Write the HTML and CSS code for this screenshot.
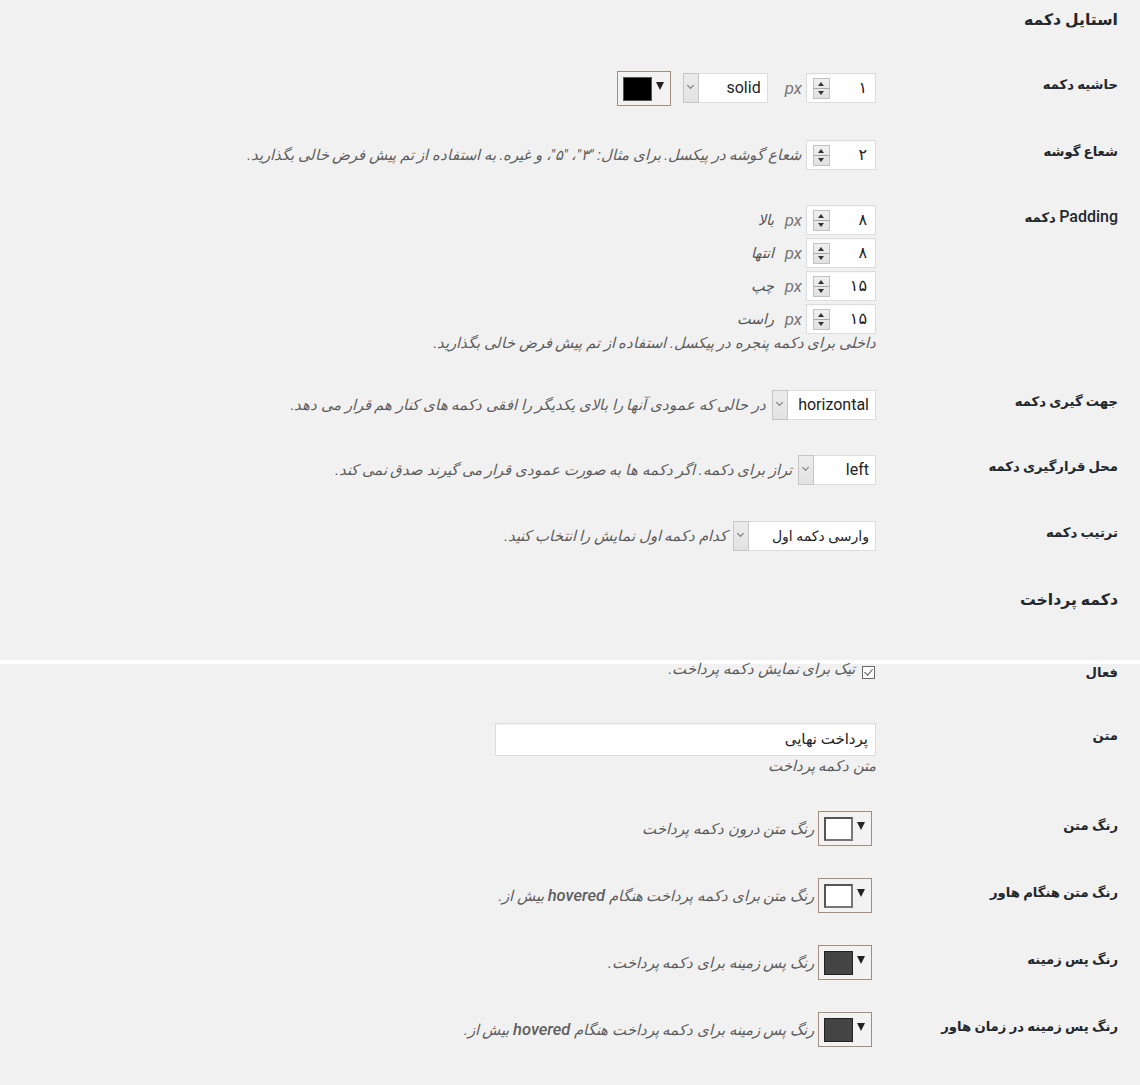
FILE: index.html
```html
<!DOCTYPE html>
<html lang="fa" dir="rtl">
<head>
<meta charset="utf-8">
<title>استایل دکمه</title>
<link rel="stylesheet" href="styles.css">
</head>
<body>
<div class="sec">
  <h2 class="title title-1">استایل دکمه</h2>

  <div class="row r1">
    <div class="th">حاشیه دکمه</div>
    <div class="td">
      <div class="inline">
        <span class="num"><span class="num-val">۱</span><span class="spin"></span></span>
        <span class="unit">px</span>
        <span class="sel w-solid"><span class="sel-val">solid</span><span class="sel-arrow"></span></span>
        <span class="picker picker-row1"><span class="swatch sw-black"></span><span class="tri"></span></span>
      </div>
    </div>
  </div>

  <div class="row r2">
    <div class="th">شعاع گوشه</div>
    <div class="td">
      <div class="inline">
        <span class="num"><span class="num-val">۲</span><span class="spin"></span></span>
        <span class="desc desc-after-num">شعاع گوشه در پیکسل. برای مثال: "۳"، "۵"، و غیره. به استفاده از تم پیش فرض خالی بگذارید.</span>
      </div>
    </div>
  </div>

  <div class="row r3">
    <div class="th"><span class="latin">Padding</span> دکمه</div>
    <div class="td">
      <div class="inline pad-line">
        <span class="num"><span class="num-val">۸</span><span class="spin"></span></span>
        <span class="unit">px</span>
        <span class="side">بالا</span>
      </div>
      <div class="inline pad-line">
        <span class="num"><span class="num-val">۸</span><span class="spin"></span></span>
        <span class="unit">px</span>
        <span class="side">انتها</span>
      </div>
      <div class="inline pad-line">
        <span class="num"><span class="num-val">۱۵</span><span class="spin"></span></span>
        <span class="unit">px</span>
        <span class="side">چپ</span>
      </div>
      <div class="inline pad-line last">
        <span class="num"><span class="num-val">۱۵</span><span class="spin"></span></span>
        <span class="unit">px</span>
        <span class="side">راست</span>
      </div>
      <p class="desc desc-block">داخلی برای دکمه پنجره در پیکسل. استفاده از تم پیش فرض خالی بگذارید.</p>
    </div>
  </div>

  <div class="row r4">
    <div class="th">جهت گیری دکمه</div>
    <div class="td">
      <div class="inline">
        <span class="sel w-hor"><span class="sel-val">horizontal</span><span class="sel-arrow"></span></span>
        <span class="desc desc-after-sel">در حالی که عمودی آنها را بالای یکدیگر را افقی دکمه های کنار هم قرار می دهد.</span>
      </div>
    </div>
  </div>

  <div class="row r5">
    <div class="th">محل قرارگیری دکمه</div>
    <div class="td">
      <div class="inline">
        <span class="sel w-left"><span class="sel-val">left</span><span class="sel-arrow"></span></span>
        <span class="desc desc-after-sel">تراز برای دکمه. اگر دکمه ها به صورت عمودی قرار می گیرند صدق نمی کند.</span>
      </div>
    </div>
  </div>

  <div class="row r6">
    <div class="th">ترتیب دکمه</div>
    <div class="td">
      <div class="inline">
        <span class="sel w-order"><span class="sel-val sel-fa">وارسی دکمه اول</span><span class="sel-arrow"></span></span>
        <span class="desc desc-after-sel">کدام دکمه اول نمایش را انتخاب کنید.</span>
      </div>
    </div>
  </div>

  <h2 class="title title-2">دکمه پرداخت</h2>
</div>

<div class="seam"></div>

<div class="sec">
  <div class="row r-active">
    <div class="th th-active">فعال</div>
    <div class="td">
      <div class="inline">
        <span class="check"></span>
        <span class="desc desc-after-check">تیک برای نمایش دکمه پرداخت.</span>
      </div>
    </div>
  </div>

  <div class="row r-text">
    <div class="th th-text">متن</div>
    <div class="td">
      <span class="text-input">پرداخت نهایی</span>
      <p class="desc desc-block desc-under-text">متن دکمه پرداخت</p>
    </div>
  </div>

  <div class="row r-color">
    <div class="th th-color">رنگ متن</div>
    <div class="td">
      <div class="inline">
        <span class="picker picker-col"><span class="swatch sw-white"></span><span class="tri"></span></span>
        <span class="desc desc-after-picker">رنگ متن درون دکمه پرداخت</span>
      </div>
    </div>
  </div>

  <div class="row r-color">
    <div class="th th-color">رنگ متن هنگام هاور</div>
    <div class="td">
      <div class="inline">
        <span class="picker picker-col"><span class="swatch sw-white"></span><span class="tri"></span></span>
        <span class="desc desc-after-picker">رنگ متن برای دکمه پرداخت هنگام <span class="latin-desc">hovered</span> بیش از.</span>
      </div>
    </div>
  </div>

  <div class="row r-color">
    <div class="th th-color">رنگ پس زمینه</div>
    <div class="td">
      <div class="inline">
        <span class="picker picker-col"><span class="swatch sw-dark"></span><span class="tri"></span></span>
        <span class="desc desc-after-picker">رنگ پس زمینه برای دکمه پرداخت.</span>
      </div>
    </div>
  </div>

  <div class="row r-color">
    <div class="th th-color">رنگ پس زمینه در زمان هاور</div>
    <div class="td">
      <div class="inline">
        <span class="picker picker-col"><span class="swatch sw-dark"></span><span class="tri"></span></span>
        <span class="desc desc-after-picker">رنگ پس زمینه برای دکمه پرداخت هنگام <span class="latin-desc">hovered</span> بیش از.</span>
      </div>
    </div>
  </div>
</div>
</body>
</html>
```

FILE: styles.css
```css
html, body {
  margin: 0;
  padding: 0;
}
body {
  background: #f1f1f1;
  font-family: Roboto, "DejaVu Sans", sans-serif;
  color: #23282d;
  height: 1085px;
  overflow: hidden;
}
.sec {
  direction: rtl;
  padding-right: 22px;
}
.title {
  margin: 0;
  font-size: 15.7px;
  font-weight: 700;
  line-height: 24px;
  color: #23282d;
}
.title-1 { padding: 8px 0 26px; }
.title-2 { padding: 15px 0 48px; }

.seam {
  height: 4px;
  background: #ffffff;
}

.row {
  display: grid;
  grid-template-columns: 242px 1fr;
  padding: 15px 0 22px;
}
.r2 { padding-bottom: 20px; }
.r3 { padding-bottom: 23px; }
.r4 { padding-bottom: 20px; }
.r5 { padding-bottom: 21px; }
.r-active { padding: 0; height: 44px; }
.r-text { padding: 15px 0 21px; }
.r-color { padding: 15px 0 17px; }

.th {
  font-size: 13.2px;
  font-weight: 700;
  line-height: 18px;
  padding-top: 3px;
  white-space: nowrap;
}
.th .latin {
  font-family: Roboto, sans-serif;
  font-size: 16px;
  font-weight: 500;
}
.th-active { padding-top: 0; }
.th-text { padding-top: 4px; }
.th-color { padding-top: 6px; }

.td {
  display: flex;
  flex-direction: column;
  align-items: flex-start;
}
.inline {
  display: flex;
  align-items: center;
}
.pad-line { margin-bottom: 3px; }
.pad-line.last { margin-bottom: 0; }

/* number input */
.num {
  box-sizing: border-box;
  width: 70px;
  height: 30px;
  background: #fff;
  border: 1px solid #dddddd;
  box-shadow: inset 0 1px 2px rgba(0,0,0,0.04);
  display: flex;
  align-items: center;
  justify-content: space-between;
  padding: 0 8px 0 6px;
}
.num-val {
  font-size: 16px;
  color: #222;
  line-height: 20px;
}
.spin {
  position: relative;
  box-sizing: border-box;
  width: 17px;
  height: 21px;
  border: 1px solid #c2c2c2;
  background:
    linear-gradient(#a8a8a8, #a8a8a8) 0 9px / 100% 1px no-repeat,
    linear-gradient(#f0f0f0, #e1e1e1);
}
.spin::before,
.spin::after {
  content: "";
  position: absolute;
  left: 4px;
  width: 0;
  height: 0;
  border-left: 3.5px solid transparent;
  border-right: 3.5px solid transparent;
}
.spin::before {
  top: 3px;
  border-bottom: 4px solid #333;
}
.spin::after {
  bottom: 3px;
  border-top: 4px solid #333;
}

.unit {
  font-family: Roboto, sans-serif;
  font-style: italic;
  font-size: 17px;
  color: #777;
  margin-right: 4px;
  line-height: 20px;
}
.side {
  font-style: italic;
  font-size: 14.5px;
  color: #555;
  margin-right: 11px;
}

/* select */
.sel {
  box-sizing: border-box;
  height: 30px;
  background: #fff;
  border: 1px solid #dddddd;
  display: flex;
  align-items: stretch;
  justify-content: space-between;
}
.sel-val {
  font-family: Roboto, "DejaVu Sans", sans-serif;
  font-size: 16px;
  color: #222;
  line-height: 28px;
  padding-right: 6px;
  white-space: nowrap;
}
.sel-val.sel-fa {
  font-size: 14px;
}
.sel-arrow {
  position: relative;
  box-sizing: border-box;
  width: 16px;
  background: linear-gradient(#ececec, #e2e2e2);
  border: 1px solid #c6c6c6;
  margin: -1px;
}
.sel-arrow::after {
  content: "";
  position: absolute;
  left: 4px;
  top: 9px;
  width: 4px;
  height: 4px;
  border-right: 1px solid #777;
  border-bottom: 1px solid #777;
  transform: rotate(45deg);
}
.w-solid { width: 85px; margin-right: 17px; }
.w-hor { width: 104px; }
.w-left { width: 78px; }
.w-order { width: 143px; }

/* color picker */
.picker {
  box-sizing: border-box;
  direction: ltr;
  width: 54px;
  height: 35px;
  border: 1px solid #a08f7d;
  background: #f2f2f2;
  display: flex;
  align-items: flex-start;
  padding: 5px 0 0 5px;
}
.picker-row1 {
  margin: -2px 12px -3px 0;
}
.picker-col {
  margin-right: 4px;
}
.swatch {
  box-sizing: border-box;
  width: 29px;
  height: 24px;
  border: 1px solid #555;
}
.sw-black { background: #000; }
.sw-white { background: #fff; border-width: 2px; border-color: #555 #777 #777 #555; }
.sw-dark { background: #444; border-color: #222; }
.tri {
  width: 0;
  height: 0;
  margin: 5px 0 0 4px;
  border-left: 4px solid transparent;
  border-right: 4px solid transparent;
  border-top: 8px solid #222;
}

/* checkbox */
.check {
  position: relative;
  box-sizing: border-box;
  width: 13px;
  height: 13px;
  margin: 2px 1px 0 0;
  align-self: flex-start;
  background: #fff;
  border: 1px solid #6a6a6a;
}
.check::after {
  content: "";
  position: absolute;
  left: 3px;
  top: 0px;
  width: 4px;
  height: 7px;
  border-right: 1.5px solid #555;
  border-bottom: 1.5px solid #555;
  transform: rotate(40deg);
}

/* text input */
.text-input {
  box-sizing: border-box;
  display: block;
  width: 381px;
  height: 33px;
  background: #fff;
  border: 1px solid #dddddd;
  box-shadow: inset 0 1px 2px rgba(0,0,0,0.05);
  font-size: 15px;
  line-height: 31px;
  padding-right: 7px;
  color: #222;
}

/* descriptions */
.desc {
  font-style: italic;
  font-size: 14.9px;
  color: #5e5e5e;
  line-height: 18px;
  white-space: nowrap;
  margin: 0;
}
.latin-desc {
  font-family: Roboto, sans-serif;
  font-style: italic;
  font-size: 16.5px;
  font-weight: 500;
}
.desc-after-num { margin-right: 5px; }
.desc-after-sel { margin-right: 6px; }
.desc-after-check { margin-right: 7px; margin-top: -4px; align-self: flex-start; }
.desc-after-picker { margin-right: 4px; }
.desc-block { margin: 0; }
.desc-under-text { margin-top: 1px; }
```
